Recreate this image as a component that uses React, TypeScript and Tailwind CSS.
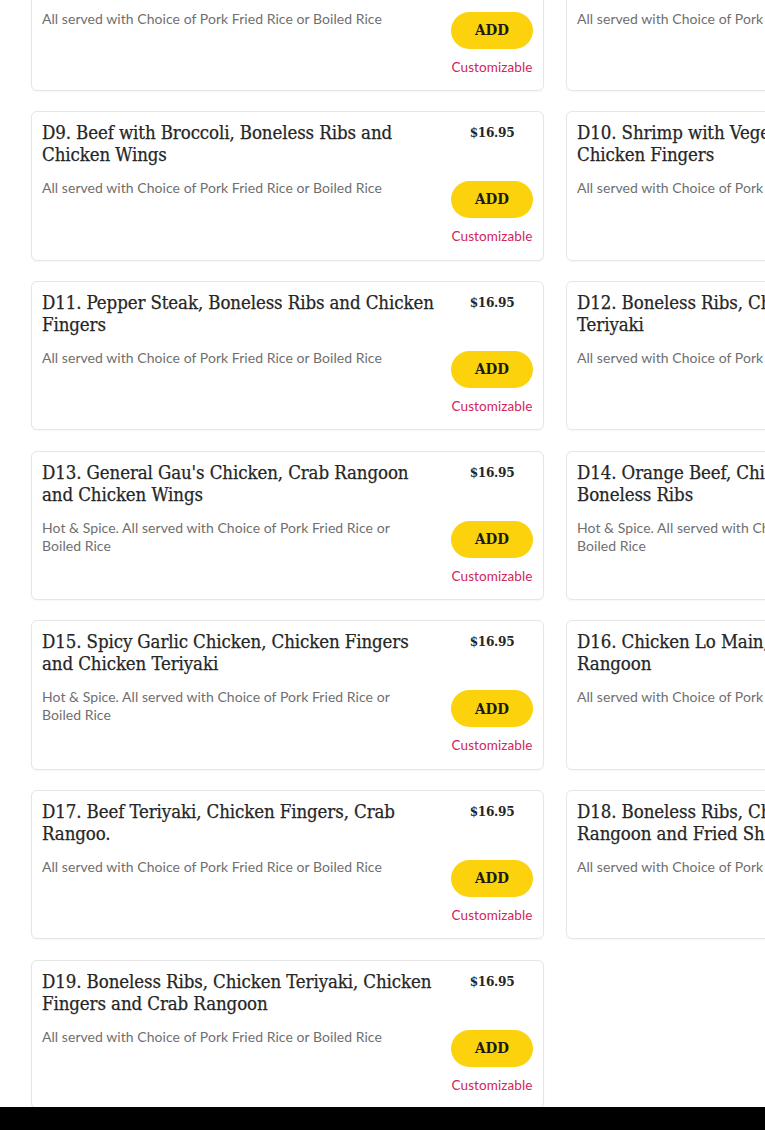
import React from "react";

type Item = {
  title: [string, string];
  desc: string;
};

const ALL = "All served with Choice of Pork Fried Rice or Boiled Rice";
const HOT = "Hot & Spice. All served with Choice of Pork Fried Rice or Boiled Rice";

const items: Item[] = [
  { title: ["D7. Sweet and Sour Chicken, Boneless Ribs", "and Chicken Wings"], desc: ALL },
  { title: ["D8. Chicken with Broccoli, Boneless Ribs", "and Chicken Fingers"], desc: ALL },
  { title: ["D9. Beef with Broccoli, Boneless Ribs and", "Chicken Wings"], desc: ALL },
  { title: ["D10. Shrimp with Vegetables, Boneless Ribs and", "Chicken Fingers"], desc: ALL },
  { title: ["D11. Pepper Steak, Boneless Ribs and Chicken", "Fingers"], desc: ALL },
  { title: ["D12. Boneless Ribs, Chicken Wings and Chicken", "Teriyaki"], desc: ALL },
  { title: ["D13. General Gau's Chicken, Crab Rangoon", "and Chicken Wings"], desc: HOT },
  { title: ["D14. Orange Beef, Chicken Fingers and", "Boneless Ribs"], desc: HOT },
  { title: ["D15. Spicy Garlic Chicken, Chicken Fingers", "and Chicken Teriyaki"], desc: HOT },
  { title: ["D16. Chicken Lo Main, Chicken Fingers and Crab", "Rangoon"], desc: ALL },
  { title: ["D17. Beef Teriyaki, Chicken Fingers, Crab", "Rangoo."], desc: ALL },
  { title: ["D18. Boneless Ribs, Chicken Fingers, Crab", "Rangoon and Fried Shrimp"], desc: ALL },
  { title: ["D19. Boneless Ribs, Chicken Teriyaki, Chicken", "Fingers and Crab Rangoon"], desc: ALL },
];

function Card({ item }: { item: Item }) {
  return (
    <div className="h-[149.5px] bg-white border border-[#e6e6e6] rounded-[6px] shadow-[0_1px_2px_rgba(0,0,0,0.04)] flex p-[10px] gap-[10px] overflow-hidden">
      <div className="flex-1 min-w-0">
        <div className="font-['DejaVu_Serif_Condensed','DejaVu_Serif',serif] font-stretch-condensed text-[18.5px] leading-[22px] text-[#262626] whitespace-nowrap tracking-[-0.1px] [-webkit-text-stroke:0.25px_#262626]">
          <div>{item.title[0]}</div>
          <div>{item.title[1]}</div>
        </div>
        <p className="mt-[13px] max-w-[380px] font-['Lato',sans-serif] text-[14px] leading-[18px] text-[#6f6f6f] tracking-[0.05px]">
          {item.desc}
        </p>
      </div>
      <div className="w-[82px] shrink-0 flex flex-col items-center">
        <div className="font-['DejaVu_Serif_Condensed','DejaVu_Serif',serif] font-stretch-condensed font-bold text-[13.5px] leading-[20px] text-[#262626] tracking-[-0.3px]">
          $16.95
        </div>
        <button className="mt-[39px] w-[82px] h-[37px] rounded-full bg-[#fbd20b] font-['DejaVu_Serif_Condensed','DejaVu_Serif',serif] font-stretch-condensed font-bold text-[15px] text-[#1a1a1a]">
          ADD
        </button>
        <div className="mt-[10px] font-['Lato',sans-serif] text-[13.5px] leading-[16px] text-[#d1255a] whitespace-nowrap tracking-[0.1px]">
          Customizable
        </div>
      </div>
    </div>
  );
}

export default function App() {
  return (
    <div className="w-[765px] h-[1130px] overflow-hidden bg-white flex flex-col">
      <div className="h-[1107px] overflow-hidden">
        <div className="-mt-[58.5px] pl-[31px] grid grid-cols-[513px_513px] gap-x-[22px] gap-y-[20.2px]">
          {items.map((it, i) => (
            <Card key={i} item={it} />
          ))}
        </div>
      </div>
      <div className="h-[23px] bg-black" />
    </div>
  );
}
